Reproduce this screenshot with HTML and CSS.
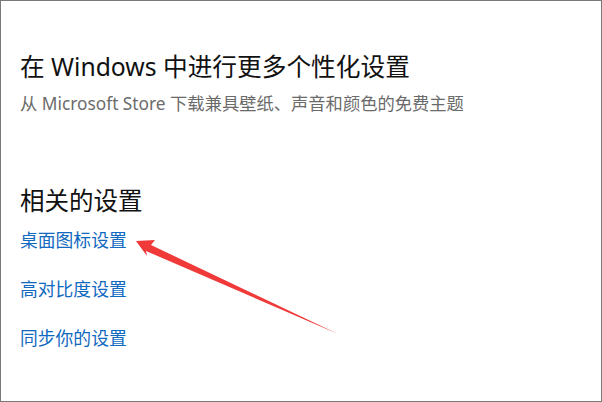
FILE: index.html
```html
<!DOCTYPE html>
<html lang="zh-CN">
<head>
<meta charset="utf-8">
<link rel="stylesheet" href="styles.css">
</head>
<body>
<div class="frame">
  <section class="more">
    <h1 class="title">在 Windows 中进行更多个性化设置</h1>
    <p class="sub">从 Microsoft Store 下载兼具壁纸、声音和颜色的免费主题</p>
  </section>
  <section class="related">
    <h2 class="heading">相关的设置</h2>
    <ul class="links">
      <li><a class="link">桌面图标设置</a></li>
      <li><a class="link">高对比度设置</a></li>
      <li><a class="link">同步你的设置</a></li>
    </ul>
  </section>
  <svg class="arrow" width="602" height="402" viewBox="0 0 602 402">
    <polygon points="136,241 155,240 151,245 338,334 146,251 147,256" fill="#f03a3a"/>
  </svg>
</div>
</body>
</html>
```

FILE: styles.css
```css
html, body {
  margin: 0;
  padding: 0;
  background: #fff;
}
.frame {
  position: relative;
  width: 602px;
  height: 402px;
  box-sizing: border-box;
  border: 1px solid #7a7a7a;
  background: #fff;
  padding: 48px 0 0 19px;
  font-family: "Noto Sans", "Noto Sans CJK SC", sans-serif;
  overflow: hidden;
}
.title {
  margin: 0;
  font-size: 24.7px;
  font-weight: 400;
  color: #111;
  line-height: 36px;
}
.sub {
  margin: 7px 0 0;
  font-size: 17.3px;
  color: #6b6b6b;
  line-height: 24px;
}
.related {
  margin-top: 69px;
}
.heading {
  margin: 0;
  font-size: 24.5px;
  font-weight: 400;
  color: #111;
  line-height: 32px;
}
.links {
  list-style: none;
  margin: 11px 0 0;
  padding: 0;
  display: flex;
  flex-direction: column;
  gap: 25px;
}
.link {
  font-size: 17.8px;
  color: #1169c0;
  line-height: 24px;
  display: block;
}
.arrow {
  position: absolute;
  left: -1px;
  top: -1px;
}
```
